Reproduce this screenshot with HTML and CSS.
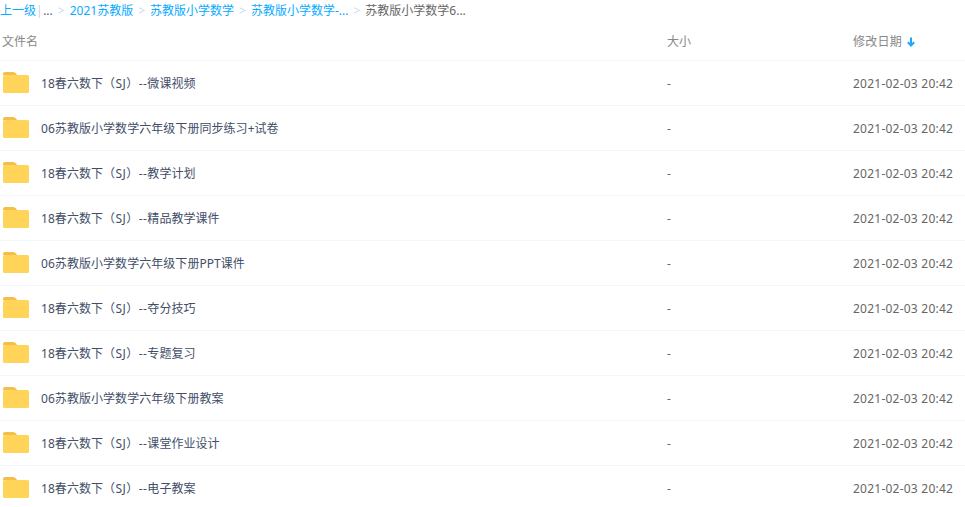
FILE: index.html
```html
<!DOCTYPE html>
<html lang="zh-CN">
<head>
<meta charset="utf-8">
<title>文件列表</title>
<link rel="stylesheet" href="styles.css">
</head>
<body>
<nav class="crumbs">
  <a class="link">上一级</a><span class="bar">|</span><span class="dots">...</span>
  <span class="sep">&gt;</span><a class="link">2021苏教版</a>
  <span class="sep">&gt;</span><a class="link">苏教版小学数学</a>
  <span class="sep">&gt;</span><a class="link">苏教版小学数学-...</a>
  <span class="sep">&gt;</span><span class="current">苏教版小学数学6...</span>
</nav>
<div class="head row">
  <span class="name">文件名</span>
  <span class="size">大小</span>
  <span class="date">修改日期<svg class="arrow" width="10" height="10" viewBox="0 0 10 10"><path d="M5 0.5V8M1.8 5.2L5 8.5L8.2 5.2" fill="none" stroke="#1ea7fd" stroke-width="2"/></svg></span>
</div>
<div class="row item"><span class="name"><svg class="folder" width="26" height="21" viewBox="0 0 26 21"><use href="#f"/></svg><span class="label">18春六数下<span class="tag">（SJ）--</span>微课视频</span></span><span class="size">-</span><span class="date">2021-02-03 20:42</span></div>
<div class="row item"><span class="name"><svg class="folder" width="26" height="21" viewBox="0 0 26 21"><use href="#f"/></svg><span class="label">06苏教版小学数学六年级下册同步练习+试卷</span></span><span class="size">-</span><span class="date">2021-02-03 20:42</span></div>
<div class="row item"><span class="name"><svg class="folder" width="26" height="21" viewBox="0 0 26 21"><use href="#f"/></svg><span class="label">18春六数下<span class="tag">（SJ）--</span>教学计划</span></span><span class="size">-</span><span class="date">2021-02-03 20:42</span></div>
<div class="row item"><span class="name"><svg class="folder" width="26" height="21" viewBox="0 0 26 21"><use href="#f"/></svg><span class="label">18春六数下<span class="tag">（SJ）--</span>精品教学课件</span></span><span class="size">-</span><span class="date">2021-02-03 20:42</span></div>
<div class="row item"><span class="name"><svg class="folder" width="26" height="21" viewBox="0 0 26 21"><use href="#f"/></svg><span class="label">06苏教版小学数学六年级下册PPT课件</span></span><span class="size">-</span><span class="date">2021-02-03 20:42</span></div>
<div class="row item"><span class="name"><svg class="folder" width="26" height="21" viewBox="0 0 26 21"><use href="#f"/></svg><span class="label">18春六数下<span class="tag">（SJ）--</span>夺分技巧</span></span><span class="size">-</span><span class="date">2021-02-03 20:42</span></div>
<div class="row item"><span class="name"><svg class="folder" width="26" height="21" viewBox="0 0 26 21"><use href="#f"/></svg><span class="label">18春六数下<span class="tag">（SJ）--</span>专题复习</span></span><span class="size">-</span><span class="date">2021-02-03 20:42</span></div>
<div class="row item"><span class="name"><svg class="folder" width="26" height="21" viewBox="0 0 26 21"><use href="#f"/></svg><span class="label">06苏教版小学数学六年级下册教案</span></span><span class="size">-</span><span class="date">2021-02-03 20:42</span></div>
<div class="row item"><span class="name"><svg class="folder" width="26" height="21" viewBox="0 0 26 21"><use href="#f"/></svg><span class="label">18春六数下<span class="tag">（SJ）--</span>课堂作业设计</span></span><span class="size">-</span><span class="date">2021-02-03 20:42</span></div>
<div class="row item"><span class="name"><svg class="folder" width="26" height="21" viewBox="0 0 26 21"><use href="#f"/></svg><span class="label">18春六数下<span class="tag">（SJ）--</span>电子教案</span></span><span class="size">-</span><span class="date">2021-02-03 20:42</span></div>
<svg class="defs" width="0" height="0"><defs><g id="f"><path d="M0 2Q0 0 2 0H10Q12 0 13 1.5L14 3H0Z" fill="#f5be48"/><rect x="0" y="3" width="26" height="18" rx="1.5" fill="#ffd459"/></g></defs></svg>
</body>
</html>
```
FILE: styles.css
```css
html, body { margin: 0; padding: 0; background: #fff; overflow: hidden; }
body { height: 507px; font: 12px/20px "Noto Sans", "Noto Sans CJK SC", sans-serif; color: #666; }
.crumbs { box-sizing: border-box; height: 20px; padding-top: 1px; white-space: nowrap; display: flex; color: #666; }
.link { color: #09aaff; }
.bar { color: #c6d0dc; margin: 0 0.5px 0 0; }
.dots { color: #666; }
.sep { color: #c5d8f3; margin: 0 5px; }
.current { color: #666; }
.row { display: grid; grid-template-columns: 667px 186px 1fr; align-items: center; border-bottom: 1px solid #f2f6fd; }
.head { box-sizing: border-box; height: 41px; color: #888; }
.head span { padding-top: 3px; }
.head .name { padding-left: 2px; }
.item { height: 44px; }
.item .name { display: flex; align-items: center; padding-left: 3px; color: #424e67; }
.item .size, .item .date { padding-top: 1px; }
.date { letter-spacing: 0.23px; white-space: nowrap; }
.folder { margin-right: 12px; margin-top: -1px; flex: none; }
.label { padding-top: 2px; letter-spacing: 0.05px; }
.tag { letter-spacing: 0.45px; }
.arrow { margin-left: 4px; vertical-align: -1px; }
.defs { position: absolute; }
```
